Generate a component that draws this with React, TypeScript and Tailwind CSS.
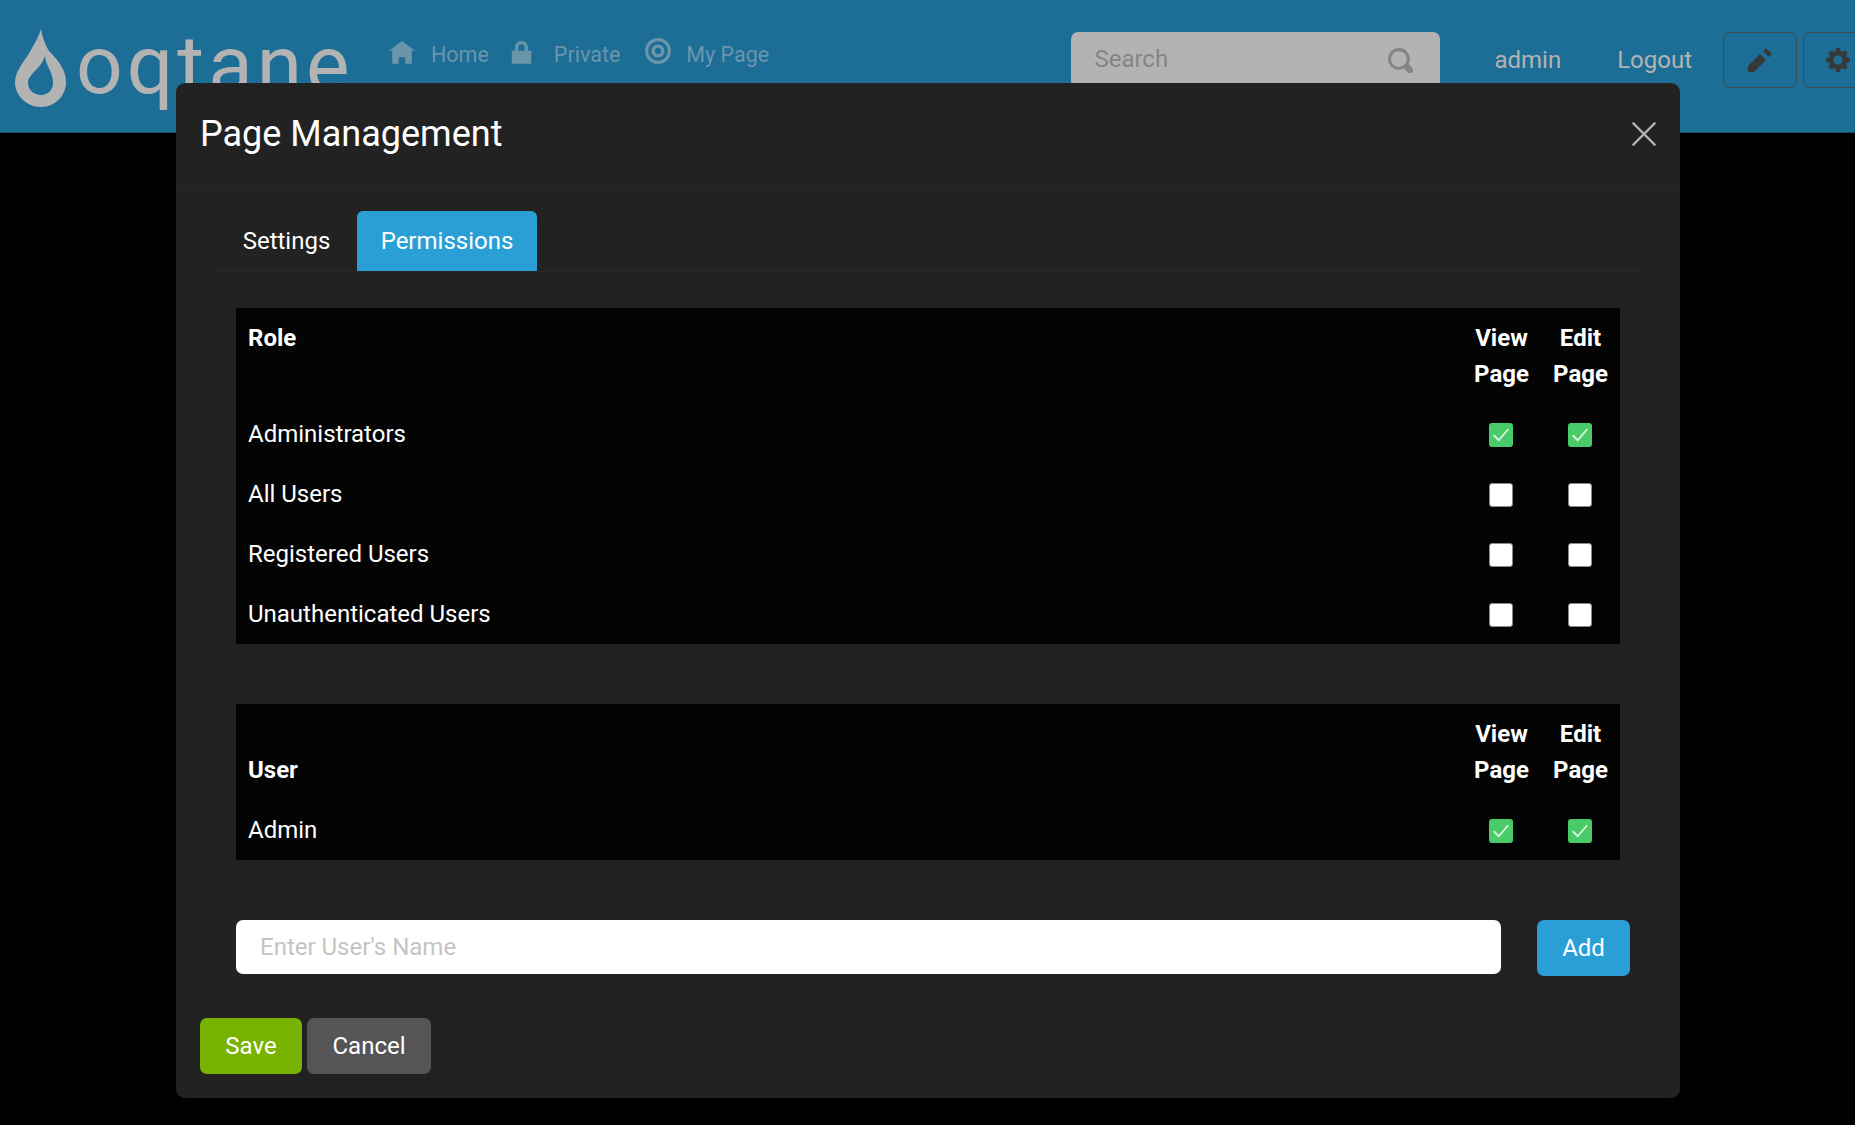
const ROLE_ROWS = [
  { name: 'Administrators', checked: true },
  { name: 'All Users', checked: false },
  { name: 'Registered Users', checked: false },
  { name: 'Unauthenticated Users', checked: false },
]

function Icon({ d, className }: { d: string; className: string }) {
  return (
    <svg viewBox="0 0 8 8" fill="currentColor" className={className}>
      <path d={d} />
    </svg>
  )
}

const home = 'M4 0l-4 3h1v4h2v-2h2v2h2v-4.03l1 .03-4-3z'
const lock = 'M4 0c-1.1 0-2 .9-2 2v1h-1v4h6v-4h-1v-1c0-1.1-.9-2-2-2zm0 1c.56 0 1 .44 1 1v1h-2v-1c0-.56.44-1 1-1z'
const target = 'M4 0c-2.2 0-4 1.8-4 4s1.8 4 4 4 4-1.8 4-4-1.8-4-4-4zm0 1c1.66 0 3 1.34 3 3s-1.34 3-3 3-3-1.34-3-3 1.34-3 3-3zm0 1c-1.1 0-2 .9-2 2s.9 2 2 2 2-.9 2-2-.9-2-2-2zm0 1c.56 0 1 .44 1 1s-.44 1-1 1-1-.44-1-1 .44-1 1-1z'
const pencil = 'M6 0l-1 1 2 2 1-1-2-2zm-2 2l-4 4v2h2l4-4-2-2z'
const glass = 'M3.5 0c-1.93 0-3.5 1.57-3.5 3.5s1.57 3.5 3.5 3.5c.59 0 1.17-.14 1.66-.41a1 1 0 0 0 .13.13l1 1a1.02 1.02 0 1 0 1.44-1.44l-1-1a1 1 0 0 0-.16-.13c.27-.49.44-1.06.44-1.66 0-1.93-1.57-3.5-3.5-3.5zm0 1c1.39 0 2.5 1.11 2.5 2.5 0 .66-.24 1.27-.66 1.72-.01.01-.02.02-.03.03a1 1 0 0 0-.13.13c-.44.4-1.04.63-1.69.63-1.39 0-2.5-1.11-2.5-2.5s1.11-2.5 2.5-2.5z'
const cog = 'M3.5 0l-.5 1.19c-.1.03-.19.08-.28.13l-1.19-.5-.72.72.5 1.19c-.05.1-.09.18-.13.28l-1.19.5v1l1.19.5c.04.1.08.18.13.28l-.5 1.19.72.72 1.19-.5c.09.04.18.09.28.13l.5 1.19h1l.5-1.19c.09-.04.19-.08.28-.13l1.19.5.72-.72-.5-1.19c.04-.09.09-.19.13-.28l1.19-.5v-1l-1.19-.5c-.03-.09-.08-.19-.13-.28l.5-1.19-.72-.72-1.19.5c-.09-.04-.19-.09-.28-.13l-.5-1.19h-1zm.5 2.5c.83 0 1.5.67 1.5 1.5s-.67 1.5-1.5 1.5-1.5-.67-1.5-1.5.67-1.5 1.5-1.5z'

function Check({ checked }: { checked: boolean }) {
  if (checked) {
    return (
      <span className="mx-auto mt-[2px] flex h-6 w-6 items-center justify-center rounded-[3px] bg-[#4acb69]">
        <svg viewBox="0 0 16 16" fill="none" stroke="#d9f3df" strokeWidth="1.25" strokeLinecap="round" strokeLinejoin="round" className="h-6 w-6">
          <path d="M3.5 8.5l3 3 6-7" />
        </svg>
      </span>
    )
  }
  return <span className="mx-auto mt-[2px] block h-6 w-6 rounded-[3px] border border-[#8a8a8a] bg-white" />
}

function Navbar() {
  return (
    <header className="flex h-[133px] items-start overflow-hidden border-b border-[#1b4a60] bg-[#1d6e96]">
      <div className="ml-[15px] mt-[29px] flex w-[339px] shrink-0 items-start">
        <svg viewBox="15 29 51 78" className="h-[78px] w-[51px] shrink-0">
          <path
            fillRule="evenodd"
            fill="#b3b3b3"
            d="M41 29C43 40 46 46 49 51C58 60 66 70 66 82C66 96 55 107 41 107C27 107 15 96 15 82C15 70 26 60 32 48C36 41 39 36 41 29ZM45 56C45 64 53 72 53 83C53 90 48 95 41 95C34 95 28 90 28 83C28 74 41 69 45 56Z"
          />
        </svg>
        <span className="ml-[10px] mt-[-14px] text-[82px] font-normal leading-[100px] tracking-[4px] text-[#b3b3b3]">oqtane</span>
      </div>
      <nav className="ml-[35px] mt-[41px] flex items-center text-[21.5px] leading-none text-[#6b95aa]">
        <Icon d={home} className="h-[26px] w-[26px]" />
        <span className="ml-[16px] pt-[2px]">Home</span>
        <Icon d={lock} className="ml-[19px] h-[26px] w-[27px]" />
        <span className="ml-[19px] pt-[2px]">Private</span>
        <Icon d={target} className="ml-[25px] -mt-[6px] h-[26px] w-[26px]" />
        <span className="ml-[15px] pt-[2px]">My Page</span>
      </nav>
      <div className="ml-auto mt-[32px] flex shrink-0 items-start">
        <div className="flex h-[56px] w-[369px] items-center justify-between rounded-[7px] bg-[#b3b3b3] pl-[23px] pr-[27px] text-[#858585]">
          <span className="-mt-[2px] text-[24px]">Search</span>
          <Icon d={glass} className="h-[25px] w-[25px]" />
        </div>
        <span className="ml-[54px] mt-[10px] text-[24px] text-[#b3b3b3]">admin</span>
        <span className="ml-[56px] mt-[10px] text-[24px] text-[#b3b3b3]">Logout</span>
        <div className="ml-[31px] flex h-[56px] w-[74px] items-center justify-center rounded-[7px] border border-[#3c4a52] text-[#383838]">
          <Icon d={pencil} className="h-[24px] w-[24px]" />
        </div>
        <div className="ml-[6px] -mr-[22px] flex h-[56px] w-[74px] items-center justify-center rounded-[7px] border border-[#3c4a52] pr-[4px] text-[#383838]">
          <Icon d={cog} className="h-[24px] w-[24px]" />
        </div>
      </div>
    </header>
  )
}

function PermTable({ firstCol, rows, className }: { firstCol: string; rows: { name: string; checked: boolean }[]; className: string }) {
  const valign = firstCol === 'User' ? 'align-bottom' : 'align-top'
  return (
    <table className={`w-full border-collapse bg-[#040404] text-left text-[24px] leading-[36px] text-white ${className}`}>
      <thead>
        <tr>
          <th className={`p-3 font-bold ${valign}`}>{firstCol}</th>
          <th className="w-[79px] p-3 text-center font-bold">View Page</th>
          <th className="w-[79px] p-3 text-center font-bold">Edit Page</th>
        </tr>
      </thead>
      <tbody>
        {rows.map(row => (
          <tr key={row.name}>
            <td className="p-3">{row.name}</td>
            <td className="py-3 pl-3 pr-[14px] text-center"><Check checked={row.checked} /></td>
            <td className="py-3 pl-3 pr-[14px] text-center"><Check checked={row.checked} /></td>
          </tr>
        ))}
      </tbody>
    </table>
  )
}

function Modal() {
  return (
    <div className="absolute left-[176px] top-[83px] h-[1015px] w-[1504px] rounded-[9px] bg-[#222222] text-white">
      <div className="flex h-[103px] items-center justify-between border-b border-[#282828] pl-6 pr-[23px]">
        <h5 className="text-[36px] font-normal leading-none">Page Management</h5>
        <svg viewBox="0 0 16 16" className="h-[26px] w-[26px]" stroke="#b3b3b3" strokeWidth="1.35" fill="none">
          <path d="M1 1l14 14M15 1L1 15" />
        </svg>
      </div>
      <div className="mx-10 mt-[25px] flex h-[61px] items-stretch border-b border-[#282828]">
        <div className="flex w-[141px] items-center justify-center text-[24px]">Settings</div>
        <div className="flex w-[180px] items-center justify-center rounded-t-[6px] bg-[#2a9fd6] text-[24px]">Permissions</div>
      </div>
      <div className="mx-[60px] mt-[36px]">
        <PermTable firstCol="Role" rows={ROLE_ROWS} className="" />
        <PermTable firstCol="User" rows={[{ name: 'Admin', checked: true }]} className="mt-[60px]" />
      </div>
      <div className="ml-[60px] mt-[60px] flex items-start">
        <div className="flex h-[54px] w-[1265px] items-center rounded-[7px] bg-white pl-6 text-[24px] text-[#c4c4c4]">Enter User's Name</div>
        <button type="button" className="ml-[36px] h-[56px] w-[93px] rounded-[7px] bg-[#2a9fd6] text-[24px] text-white">Add</button>
      </div>
      <div className="ml-6 mt-[42px] flex gap-[5px]">
        <button type="button" className="h-[56px] w-[102px] rounded-[7px] bg-[#77b300] text-[24px] text-white">Save</button>
        <button type="button" className="h-[56px] w-[124px] rounded-[7px] bg-[#555555] text-[24px] text-white">Cancel</button>
      </div>
    </div>
  )
}

export default function App() {
  return (
    <div className="relative h-[1125px] w-full overflow-hidden bg-black font-['Roboto',sans-serif]">
      <Navbar />
      <Modal />
    </div>
  )
}
